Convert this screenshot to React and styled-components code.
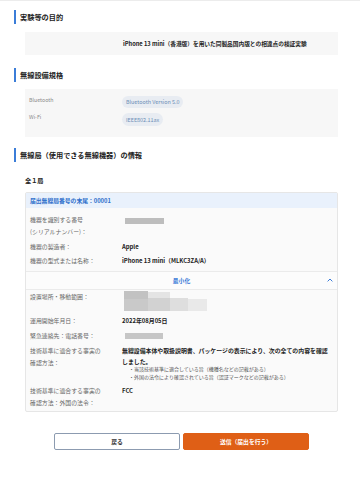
import React from 'react';
import styled, { createGlobalStyle } from 'styled-components';

const GlobalStyle = createGlobalStyle`
  body {
    margin: 0;
    background: #fff;
    font-family: "Noto Sans CJK JP", "Noto Sans", sans-serif;
    color: #222;
  }
`;

// Page shell
const Page = styled.div`
  width: 360px;
  min-height: 480px;
  box-sizing: border-box;
  border-top: 1px solid #ececec;
  padding: 9px 22px 0 14px;
`;

const Heading = styled.h2`
  margin: ${(p) => p.$top || 0}px 0 0;
  height: 14px;
  display: flex;
  align-items: center;
  border-left: 2px solid #3b7dd8;
  padding-left: 4px;
  font-size: 7.2px;
  font-weight: 700;
  color: #222;
`;

const Body = styled.div`
  margin-left: 11px;
`;

const GrayBox = styled.div`
  margin-top: ${(p) => p.$top || 0}px;
  height: ${(p) => p.$h}px;
  box-sizing: border-box;
  background: #f7f7f7;
  padding: ${(p) => p.$pad};
  display: flex;
  flex-direction: column;
  gap: 5px;
`;

const SpecRow = styled.div`
  display: flex;
  align-items: flex-start;
`;

const SpecLabel = styled.div`
  width: 97px;
  padding-left: 4px;
  box-sizing: border-box;
  font-size: 5.3px;
  line-height: 8px;
  color: #8a8a8a;
`;

const Purpose = styled.div`
  padding-left: 98px;
  font-size: 5.7px;
  font-weight: 700;
  line-height: 23px;
`;

const Pill = styled.span`
  display: inline-flex;
  align-items: center;
  height: ${(p) => p.$h || 12}px;
  padding: 0 4px;
  border-radius: 7px;
  background: #e8ecf2;
  color: #6b8cb6;
  font-size: 5.4px;
`;

const Count = styled.div`
  margin-top: 13px;
  font-size: 6.2px;
  font-weight: 700;
  line-height: 12px;
`;

const Card = styled.div`
  margin-top: 5px;
  border: 1px solid #e6e6e6;
  border-radius: 2px;
  background: #fafafa;
`;

const CardHead = styled.div`
  height: 15px;
  display: flex;
  align-items: center;
  padding-left: 4px;
  background: #e9f1fc;
  color: #2f6fcb;
  font-size: 5.8px;
  font-weight: 700;
`;

const Block = styled.div`
  padding: ${(p) => p.$pad};
`;

const Row = styled.div`
  display: flex;
  align-items: flex-start;
  margin-top: ${(p) => p.$top || 0}px;
  min-height: ${(p) => p.$h || 12}px;
`;

const Label = styled.div`
  width: 96px;
  padding-left: 4px;
  box-sizing: border-box;
  font-size: 5.9px;
  line-height: 12px;
  color: #666;
  flex-shrink: 0;
`;

const Value = styled.div`
  font-size: 5.9px;
  line-height: ${(p) => p.$lh || 12}px;
  font-weight: 700;
  color: #222;
  white-space: nowrap;
`;

const Bullets = styled.ul`
  list-style: none;
  margin: -2px 0 0;
  padding: 0 0 0 7px;
  font-size: 5px;
  line-height: 8px;
  font-weight: 400;
  color: #555;
`;

const Toggle = styled.div`
  height: 17px;
  border-top: 1px solid #ebebeb;
  border-bottom: 1px solid #ebebeb;
  background: #fcfcfc;
  display: flex;
  align-items: center;
  justify-content: center;
  position: relative;
  color: #3b7bd8;
  font-size: 5.8px;
  font-weight: 700;
`;

const Chevron = styled.svg`
  position: absolute;
  right: 4px;
  top: 6px;
`;

const Redact = styled.svg`
  display: block;
`;

const Actions = styled.div`
  margin-top: 21px;
  display: flex;
  justify-content: center;
  gap: 3px;
`;

const Button = styled.button`
  width: 126px;
  height: 17px;
  border-radius: 2px;
  border: 1px solid ${(p) => (p.$primary ? '#df5f16' : '#8c9bb0')};
  background: ${(p) => (p.$primary ? '#df5f16' : '#fff')};
  color: ${(p) => (p.$primary ? '#fff' : '#333')};
  font-family: inherit;
  font-size: 5.8px;
  font-weight: 700;
  padding: 0;
  margin: 0;
`;

const App = () => (
  <>
    <GlobalStyle />
    <Page>
      <Heading>実験等の目的</Heading>
      <Body>
        <GrayBox $top={8} $h={23} $pad="0">
          <Purpose>iPhone 13 mini（香港版）を用いた同製品国内版との相違点の検証実験</Purpose>
        </GrayBox>
      </Body>

      <Heading $top={13}>無線設備規格</Heading>
      <Body>
        <GrayBox $top={7} $h={48} $pad="7px 0 0">
          <SpecRow>
            <SpecLabel>Bluetooth</SpecLabel>
            <Pill>Bluetooth Version 5.0</Pill>
          </SpecRow>
          <SpecRow>
            <SpecLabel>Wi-Fi</SpecLabel>
            <Pill $h={13}>IEEE802.11ax</Pill>
          </SpecRow>
        </GrayBox>
      </Body>

      <Heading $top={11}>無線局（使用できる無線機器）の情報</Heading>
      <Body>
        <Count>全１局</Count>
        <Card>
          <CardHead>届出無線局番号の末尾：00001</CardHead>
          <Block $pad="6px 0 4px">
            <Row $h={24}>
              <Label>
                機器を識別する番号
                <br />
                (シリアルナンバー)：
              </Label>
              <Redact width="42" height="12" viewBox="0 0 42 12">
                <rect x="3" y="4" width="40" height="6" fill="#bdbdbd" />
              </Redact>
            </Row>
            <Row $top={3}>
              <Label>機器の製造者：</Label>
              <Value>Apple</Value>
            </Row>
            <Row $top={2}>
              <Label>機器の型式または名称：</Label>
              <Value>iPhone 13 mini（MLKC3ZA/A）</Value>
            </Row>
          </Block>
          <Toggle>
            最小化
            <Chevron width="6" height="4" viewBox="0 0 6 4">
              <path d="M0.6 3.4 L3 1 L5.4 3.4" fill="none" stroke="#3b7bd8" strokeWidth="1" />
            </Chevron>
          </Toggle>
          <Block $pad="1px 0 2px">
            <Row $h={20}>
              <Label>設置場所・移動範囲：</Label>
              <Redact width="86" height="20" viewBox="0 0 86 20">
                <rect x="2" y="0" width="24" height="8" fill="#c2c2c2" />
                <rect x="26" y="1" width="22" height="7" fill="#e4e4e4" />
                <rect x="2" y="8" width="24" height="12" fill="#c9c9c9" />
                <rect x="26" y="7" width="22" height="13" fill="#d2d2d2" />
                <rect x="48" y="7" width="18" height="13" fill="#dedede" />
                <rect x="66" y="8" width="19" height="12" fill="#e9e9e9" />
              </Redact>
            </Row>
            <Row $top={4}>
              <Label>運用開始年月日：</Label>
              <Value>2022年08月05日</Value>
            </Row>
            <Row $top={3}>
              <Label>緊急連絡先：電話番号：</Label>
              <Redact width="42" height="12" viewBox="0 0 42 12">
                <rect x="3" y="3" width="38" height="6" fill="#c6c6c6" />
              </Redact>
            </Row>
            <Row $top={3} $h={40}>
              <Label>
                技術基準に適合する事実の
                <br />
                確認方法：
              </Label>
              <Value $lh={11}>
                無線設備本体や取扱説明書、パッケージの表示により、次の全ての内容を確認
                <br />
                しました。
                <Bullets>
                  <li>・当該技術基準に適合している旨（機種名などの記載がある）</li>
                  <li>・外国の法令により確認されている旨（認証マークなどの記載がある）</li>
                </Bullets>
              </Value>
            </Row>
            <Row $h={24}>
              <Label>
                技術基準に適合する事実の
                <br />
                確認方法：外国の法令：
              </Label>
              <Value>FCC</Value>
            </Row>
          </Block>
        </Card>
        <Actions>
          <Button>戻る</Button>
          <Button $primary>送信（届出を行う）</Button>
        </Actions>
      </Body>
    </Page>
  </>
);

export default App;
